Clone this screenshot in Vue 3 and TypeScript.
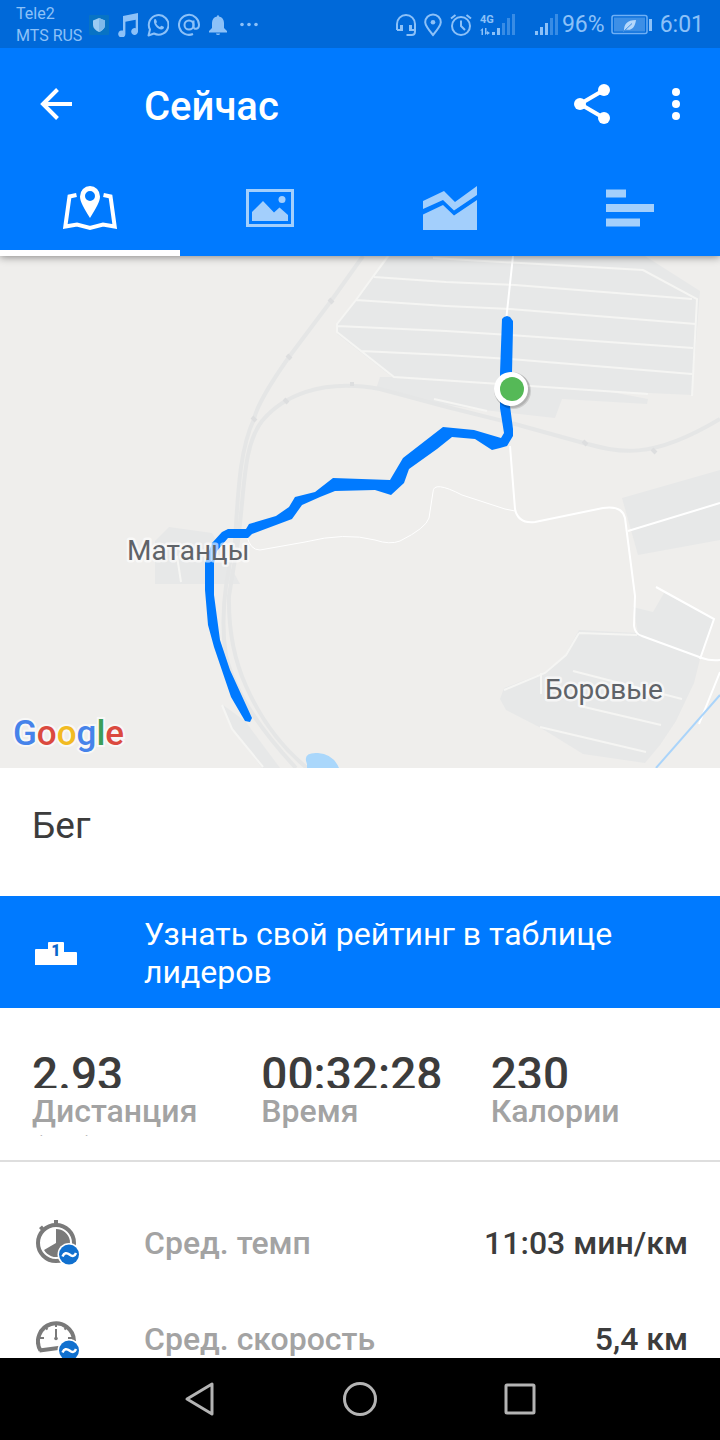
<script setup lang="ts">
import { ref } from 'vue'

interface Stat {
  value: string
  label: string
}

interface Metric {
  icon: 'pace' | 'speed'
  label: string
  value: string
}

type TabId = 'map' | 'photo' | 'chart' | 'laps'

const tabs: { id: TabId; label: string }[] = [
  { id: 'map', label: 'Карта' },
  { id: 'photo', label: 'Фото' },
  { id: 'chart', label: 'График' },
  { id: 'laps', label: 'Отрезки' },
]
const activeTab = ref<TabId>('map')

const stats: Stat[] = [
  { value: '2.93', label: 'Дистанция (км)' },
  { value: '00:32:28', label: 'Время' },
  { value: '230', label: 'Калории' },
]

const metrics: Metric[] = [
  { icon: 'pace', label: 'Сред. темп', value: '11:03 мин/км' },
  { icon: 'speed', label: 'Сред. скорость', value: '5,4 км' },
]
</script>

<template>
  <div class="screen">
    <div class="status">
      <div class="carriers">
        <span>Tele2</span>
        <span>MTS RUS</span>
      </div>
      <div class="notices">
        <svg class="shield" width="20" height="20" viewBox="0 0 20 20">
          <rect width="20" height="20" rx="1" fill="#0873c4" />
          <path d="M10 3 16 5.500v4.500c0 3-2.500 5.500-6 7-3.500-1.500-6-4-6-7V5.500z" fill="#9bcbf3" />
          <path d="M10 3 16 5.500v4.500c0 3-2.500 5.500-6 7z" fill="#7fb9ea" />
        </svg>
        <svg width="20" height="24" viewBox="0 0 20 24" fill="currentColor">
          <path d="M5 3 20 0v18.500a3.400 3.400 0 1 1-2.300-3.200V6.800L7.400 8.800V21A3.600 3.600 0 1 1 5 17.600z" />
        </svg>
        <svg width="22" height="24" viewBox="0 0 22 24">
          <path d="M1.500 22.500 3 16.500A9.800 9.800 0 1 1 7 20.500z" fill="none" stroke="currentColor" stroke-width="2" stroke-linejoin="round" />
          <path d="M7.300 6.500c.8-.8 1.500-.5 1.800.2l.8 2c.2.600-.9 1.500-.7 1.900.8 1.500 2 2.600 3.600 3.300.5.200 1.300-1.300 1.800-1.100l2.100 1c.6.400.1 1.800-.6 2.300-4 2.200-10.900-5-8.800-9.600z" fill="currentColor" />
        </svg>
        <svg width="22" height="24" viewBox="0 0 22 24" fill="none" stroke="currentColor" stroke-width="2">
          <circle cx="11" cy="12" r="4.500" />
          <path d="M15.500 7.500v6c0 3.500 5.500 3 5.500-1.500a10 10 0 1 0-6 9" />
        </svg>
        <svg width="18" height="22" viewBox="0 0 18 22" fill="currentColor">
          <path d="M8 2.500C8 .7 10 .7 10 2.500c3.400.6 5 3.100 5 6.500v5l3 3v1.500H0V17l3-3V9c0-3.400 1.600-5.900 5-6.500z" />
          <path d="M7 19.500h4a2 1.500 0 0 1-4 0z" />
        </svg>
        <svg class="more-notices" width="18" height="22" viewBox="0 0 18 22" fill="currentColor">
          <circle cx="2" cy="10.500" r="1.800" />
          <circle cx="9" cy="10.500" r="1.800" />
          <circle cx="16" cy="10.500" r="1.800" />
        </svg>
      </div>
      <div class="system">
        <svg width="20" height="24" viewBox="0 0 20 24" fill="none" stroke="currentColor" stroke-width="2">
          <path d="M1 17v-6a9 9 0 0 1 18 0v7.500q0 3.500-3.500 3.500H10.500" />
          <path d="M1 17h4M15 17h4" />
          <path d="M5.500 12v6M14.500 12v6" stroke-width="3" />
        </svg>
        <svg width="18" height="24" viewBox="0 0 18 24">
          <path d="M9 22C4 16 1.200 12.500 1.200 9.200a7.800 7.800 0 0 1 15.600 0C16.800 12.500 14 16 9 22z" fill="none" stroke="currentColor" stroke-width="2" />
          <circle cx="9" cy="9.200" r="2.300" fill="currentColor" />
        </svg>
        <svg width="22" height="24" viewBox="0 0 22 24" fill="none" stroke="currentColor" stroke-width="2">
          <circle cx="11" cy="13" r="9" />
          <path d="M11 7.500V13l4 4M1 5.500 5.500 2M21 5.500 16.500 2" />
        </svg>
        <svg width="35" height="24" viewBox="0 0 35 24" fill="currentColor">
          <text x="0" y="10" class="network">4G</text>
          <path d="M0 17.500 3 15v7H1.500v-4.500zM5 15h1.500v4.500h1.500L5 22zM7 18l3 2-3 2z" />
          <path d="M12 19h3v3h-3zM17 15h3v7h-3z" />
          <path d="M22 10h3v12h-3zM27 5h3v17h-3zM32 1h3v21h-3z" opacity=".4" />
        </svg>
        <svg class="second" width="23" height="24" viewBox="0 0 23 24" fill="currentColor">
          <path d="M0 18h3v4H0zM5 14h3v8H5zM10 10h3v12h-3z" />
          <path d="M15 5h3v17h-3zM20 1h3v21h-3z" opacity=".4" />
        </svg>
        <span class="charge">96%</span>
        <svg width="41" height="22" viewBox="0 0 41 22">
          <rect x="1" y="1.500" width="35" height="18" rx="2" fill="none" stroke="#6fb0f5" stroke-width="1.500" />
          <rect x="3" y="3.500" width="31" height="14" fill="#3d8fe6" />
          <path d="M13 17c0-7 3-11 12-11-1 7-4 11-10 9.500z" fill="#b5d8fb" />
          <path d="M12 18 21 9.500" stroke="#3d8fe6" stroke-width="1" />
          <path d="M38 5h3v12h-3z" fill="currentColor" />
        </svg>
        <time class="clock">6:01</time>
      </div>
    </div>

    <header class="appbar">
      <div class="toolbar">
        <button class="icon-button" type="button" aria-label="Назад">
          <svg width="32" height="32" viewBox="0 0 32 32" fill="none" stroke="#fff" stroke-width="4">
            <path d="M32 16H4M17.500 1.500 3 16l14.500 14.500" />
          </svg>
        </button>
        <h1>Сейчас</h1>
        <button class="icon-button share" type="button" aria-label="Поделиться">
          <svg width="36" height="40" viewBox="0 0 36 40" fill="#fff">
            <path d="M30 6 6 20l24 14" fill="none" stroke="#fff" stroke-width="4" />
            <circle cx="30" cy="6" r="6" />
            <circle cx="6" cy="20" r="6" />
            <circle cx="30" cy="34" r="6" />
          </svg>
        </button>
        <button class="icon-button" type="button" aria-label="Ещё">
          <svg width="8" height="32" viewBox="0 0 8 32" fill="#fff">
            <circle cx="4" cy="4" r="4" />
            <circle cx="4" cy="16" r="4" />
            <circle cx="4" cy="28" r="4" />
          </svg>
        </button>
      </div>
      <nav class="tabs">
        <button
          v-for="tab in tabs"
          :key="tab.id"
          type="button"
          :class="['tab', { active: tab.id === activeTab }]"
          :aria-label="tab.label"
          @click="activeTab = tab.id"
        >
          <svg v-if="tab.id === 'map'" width="54" height="46" viewBox="0 0 54 46">
            <path d="M13.500 10 6.500 11.500 2.300 41.500 14 39.500 27 43 40 39.500 51.700 41.500 47.500 11.500 40.500 10" fill="none" stroke="currentColor" stroke-width="4" />
            <path fill-rule="evenodd" d="M27 33C21 23 17 17 17 11.500a10 10.500 0 0 1 20 0C37 17 33 23 27 33zM27 6a5 5 0 1 0 0 10 5 5 0 0 0 0-10z" fill="currentColor" />
          </svg>
          <svg v-else-if="tab.id === 'photo'" width="48" height="38" viewBox="0 0 48 38">
            <rect x="1.500" y="1.500" width="45" height="35" fill="none" stroke="currentColor" stroke-width="3" />
            <path d="M6 32V23L17 12 28 23.500 33.500 18.500 42 26v6z" fill="currentColor" />
            <circle cx="36" cy="10.500" r="3.500" fill="currentColor" />
          </svg>
          <svg v-else-if="tab.id === 'chart'" width="54" height="46" viewBox="0 0 54 46" fill="currentColor">
            <path d="M0 16 21 6 32 17 54 1v9L31 25.500 20 15 0 24z" />
            <path d="M0 29.500 20 20 31 30.500 54 15v30H0z" />
          </svg>
          <svg v-else width="48" height="38" viewBox="0 0 48 38" fill="currentColor">
            <path d="M0 .5h20v8H0zM0 15h48v8H0zM0 29.500h34v8H0z" />
          </svg>
        </button>
      </nav>
    </header>

    <main class="content">
      <svg class="map" viewBox="0 0 720 512" preserveAspectRatio="xMidYMid slice" role="img" aria-label="Маршрут">
        <rect width="720" height="512" fill="#efeeec" />
        <g fill="#e7e8e8">
          <path d="M390 0 356 44 336 70 337 78 392 121 380 121 376 133 420 145 475 153 555 162 562 143 647 148 648 143 606 135 692 139 700 35 645 0z" />
          <path d="M622 242 720 214V284L638 299z" />
          <path d="M633 351 653 356 664 337 714 363 700 403 694 427 676 465 660 489 645 507 583 498 541 472 506 454 500 443 504 432 545 416 565 399 579 374 638 377z" />
          <path d="M155 285 169 271 212 277 240 328H155z" />
          <path d="M223 449 245 465 280 512H262L231 471z" />
        </g>
        <g fill="none" stroke="#e5e6e6" stroke-width="4">
          <path d="M363 0 331 45 289 101Q258 145 254 163C239 195 238 240 235 285Q218 350 226 400 238 450 296 512" />
          <path d="M720 163C650 205 620 197 580 186L515 168 447 151 380 133C320 122 282 141 262 165 243 190 245 230 238 285L229 340Q228 390 246 430 268 480 307 512" />
          <path d="M329 43 333 47M287 99 291 103M350 128 354 128M284 143 288 147M252 161 256 165M583 185 587 189M652 193 656 197" stroke="#dddedf" />
        </g>
        <g fill="none" stroke="#f5f5f3" stroke-width="2">
          <path d="M388 0 356 44 337 68V76L394 121 500 128M433 2 643 14 697 43 692 140M374 21 446 26 515 29 692 43M356 44 446 50 510 53 696 68M337 70 446 75 510 79 693 92M361 95 446 99 510 103 692 118M500 128 648 138M434 143 487 155" />
          <path d="M579 377 566 399 545 417 504 434M541 417V438M579 377 637 379M573 415 682 443M580 450 661 469M540 471 646 496M177 300 181 326M222 449 232 473 263 511" />
        </g>
        <g fill="none" stroke="#fff" stroke-width="2">
          <path d="M513 0 506 65M510 190 515 253Q518 268 535 266L603 252Q622 249 625 262L635 340 634 370Q635 378 642 380L702 402Q710 405 720 404" />
          <path d="M515 255 505 253 462 239Q433 224 433 236L429 262Q426 272 400 285 390 289 375 284 345 276 305 286L260 294Q250 294 247 280" stroke-width="1" />
          <path d="M628 275 720 247M656 331 714 363 700 403M720 416 699 468" />
        </g>
        <path d="M307 508Q302 496 318 497 333 498 339 512H307z" fill="#aad7fb" />
        <path d="M656 512 720 439" fill="none" stroke="#aad4fa" stroke-width="2" />
        <path
          d="M502 63 504 61 507 60 510 61 513 65 513 72 512 117 510 150 513 173 513 180 507 190 500 192 492 194 475 183 452 181 437 193 409 213 404 227 391 239 375 234 335 235 320 241 302 249 292 263 252 278 248 282H228L217 295 214 307V339L220 384 230 414 252 462 250 466 245 465 231 441 214 391 208 369 205 334V307L212 287 222 276 228 273H246L249 268 276 260 289 251 295 241 315 236 333 222 390 224 403 202 443 171 474 174 501 182 504 177 500 152V117z"
          fill="#007aff"
        />
        <circle cx="513" cy="135" r="18" fill="#000" opacity=".12" />
        <circle cx="512" cy="134" r="18" fill="#000" opacity=".12" />
        <circle cx="511" cy="133" r="17" fill="#fff" />
        <circle cx="512" cy="133" r="12" fill="#55b957" />
        <text x="127" y="304" class="place">Матанцы</text>
        <text x="545" y="443" class="place">Боровые</text>
        <text x="13" y="489" class="brand"><tspan fill="#4683ea">G</tspan><tspan fill="#db4a3f">o</tspan><tspan fill="#f2bb22">o</tspan><tspan fill="#4683ea">g</tspan><tspan fill="#3b9e58">l</tspan><tspan fill="#db4a3f">e</tspan></text>
      </svg>

      <h2 class="activity">Бег</h2>

      <a class="leaderboard" href="#leaderboard">
        <svg width="42" height="24" viewBox="0 0 42 24">
          <path d="M1 8H13V2Q13 1 14 1H28Q29 1 29 2V11H41Q42 11 42 12V24H0V9Q0 8 1 8z" fill="#fff" />
          <text x="21" y="15" class="rank" text-anchor="middle">1</text>
        </svg>
        <span>Узнать свой рейтинг в таблице лидеров</span>
      </a>

      <dl class="stats">
        <div v-for="stat in stats" :key="stat.label" class="stat">
          <dd>{{ stat.value }}</dd>
          <dt>{{ stat.label }}</dt>
        </div>
      </dl>

      <ul class="metrics">
        <li v-for="metric in metrics" :key="metric.label" class="metric">
          <svg width="44" height="46" viewBox="0 0 44 46">
            <g v-if="metric.icon === 'pace'">
              <circle cx="20" cy="23" r="18" fill="none" stroke="#7a7a7a" stroke-width="4" />
              <path d="M18 0h4v5h-4zM3 8 6 5.500 9 9 6 11.500z" fill="#7a7a7a" />
              <path d="M20 23V9A14 14 0 1 1 8 30z" fill="#7a7a7a" />
            </g>
            <g v-else fill="none" stroke="#7a7a7a">
              <path d="M4.500 34.500A18 18 0 1 1 38 25M3.500 34.500 26 31.500" stroke-width="4" />
              <path d="M20 7v4M4 22h4M32 22h4M8.500 10.500 11.500 13.500M31.500 10.500 28.500 13.500" stroke-width="2" />
              <path d="M20 13v11" stroke-width="2" />
              <circle cx="20" cy="22.500" r="1.800" fill="#7a7a7a" stroke="none" />
            </g>
            <circle cx="33" cy="34.500" r="11.500" fill="#fff" />
            <circle cx="33" cy="34.500" r="10" fill="#1070cf" />
            <path d="M26.500 36.500Q29 31 33.500 34.500T40 33" fill="none" stroke="#fff" stroke-width="2.500" />
          </svg>
          <span class="metric-label">{{ metric.label }}</span>
          <span class="metric-value">{{ metric.value }}</span>
        </li>
      </ul>
    </main>

    <nav class="system-nav">
      <button type="button" aria-label="Назад">
        <svg width="36" height="36" viewBox="0 0 36 36">
          <path d="M5 18 30 3V33z" />
        </svg>
      </button>
      <button type="button" aria-label="Домой">
        <svg width="36" height="36" viewBox="0 0 36 36">
          <circle cx="18" cy="18" r="15.500" />
        </svg>
      </button>
      <button type="button" aria-label="Недавние">
        <svg width="36" height="36" viewBox="0 0 36 36">
          <rect x="4" y="4" width="28" height="28" rx="1" />
        </svg>
      </button>
    </nav>
  </div>
</template>

<style>
html,
body {
  background: #fff;
}
</style>

<style scoped>
.screen {
  display: flex;
  flex-direction: column;
  height: 100vh;
  overflow: hidden;
  background: #fff;
  color: #3c3c3c;
  font-family: Roboto, "Noto Sans", sans-serif;
}

button {
  display: flex;
  align-items: center;
  justify-content: center;
  padding: 0;
  border: 0;
  background: none;
  color: inherit;
  font: inherit;
}

svg {
  flex: none;
}

.status {
  position: relative;
  z-index: 2;
  display: flex;
  box-sizing: border-box;
  flex: none;
  align-items: center;
  height: 48px;
  padding: 2px 16px 0;
  background: #0069d9;
  color: #8cc1f8;
}

.carriers {
  display: flex;
  flex-direction: column;
  width: 73px;
  font-size: 16px;
  line-height: 22px;
  white-space: nowrap;
}

.notices {
  display: flex;
  align-items: center;
  gap: 9px;
}

.more-notices {
  margin-left: 4px;
}

.system {
  display: flex;
  align-items: center;
  gap: 8px;
  margin-left: auto;
  font-size: 24px;
  line-height: 28px;
}

.network {
  font-size: 11px;
  font-weight: 700;
}

.second {
  margin-left: 12px;
}

.charge {
  margin: 0 -2px 0 -4px;
}

.charge,
.clock {
  font-size: 23px;
}

.appbar {
  position: relative;
  z-index: 1;
  flex: none;
  background: #007aff;
  color: #fff;
  box-shadow: 0 1px 8px rgba(0, 0, 0, 0.45);
}

.toolbar {
  display: flex;
  align-items: center;
  height: 112px;
  padding: 0 40px;
}

.icon-button {
  height: 48px;
}

h1 {
  flex: 1;
  margin: 6px 0 0 72px;
  font-size: 40px;
  font-weight: 500;
  line-height: 48px;
}

.share {
  margin-right: 62px;
}

.tabs {
  display: grid;
  grid-template-columns: repeat(4, 1fr);
}

.tab {
  height: 96px;
  border-top: 6px solid transparent;
  border-bottom: 6px solid transparent;
  color: #a3cffc;
}

.tab.active {
  border-bottom-color: #fff;
  color: #fff;
}

.content {
  flex: 1;
  min-height: 0;
  overflow: hidden;
}

.map {
  display: block;
  width: 100%;
  height: auto;
}

.place {
  fill: #5f6368;
  font-size: 28px;
  paint-order: stroke;
  stroke: rgba(255, 255, 255, 0.6);
  stroke-width: 5px;
  stroke-linejoin: round;
}

.brand {
  font-size: 35px;
  font-weight: 500;
  paint-order: stroke;
  stroke: rgba(255, 255, 255, 0.6);
  stroke-width: 4px;
}

.activity {
  margin: 0;
  padding: 34px 32px 46px;
  font-size: 37px;
  font-weight: 400;
  line-height: 48px;
}

.leaderboard {
  display: flex;
  align-items: center;
  gap: 67px;
  padding: 19px 32px 17px 35px;
  background: #007aff;
  color: #fff;
  font-size: 32px;
  line-height: 38px;
  text-decoration: none;
}

.rank {
  fill: #0a66cc;
  font-size: 16px;
  font-weight: 900;
}

.stats {
  display: grid;
  grid-template-columns: repeat(3, 1fr);
  margin: 0;
  padding: 32px 0 24px 32px;
  border-bottom: 2px solid #dedede;
}

.stat dd {
  box-sizing: border-box;
  height: 48px;
  margin: 0;
  padding-top: 6px;
  overflow: hidden;
  font-size: 46px;
  font-weight: 500;
  line-height: 56px;
}

.stat dt {
  box-sizing: border-box;
  height: 48px;
  padding: 4px 48px 0 0;
  overflow: hidden;
  color: #a3a3a3;
  font-size: 32px;
  font-weight: 500;
  line-height: 38px;
}

.metrics {
  margin: 0;
  padding: 33px 0 0;
  list-style: none;
}

.metric {
  display: flex;
  align-items: center;
  height: 96px;
  padding: 0 32px 0 36px;
  font-size: 32px;
  font-weight: 500;
  line-height: 38px;
}

.metric-label {
  margin-left: 64px;
  color: #a3a3a3;
}

.metric-value {
  margin-left: auto;
}

.system-nav {
  display: flex;
  flex: none;
  justify-content: center;
  gap: 124px;
  padding: 23px 0;
  background: #000;
}

.system-nav svg {
  fill: none;
  stroke: #b4b4b4;
  stroke-width: 3px;
  stroke-linejoin: round;
}
</style>
